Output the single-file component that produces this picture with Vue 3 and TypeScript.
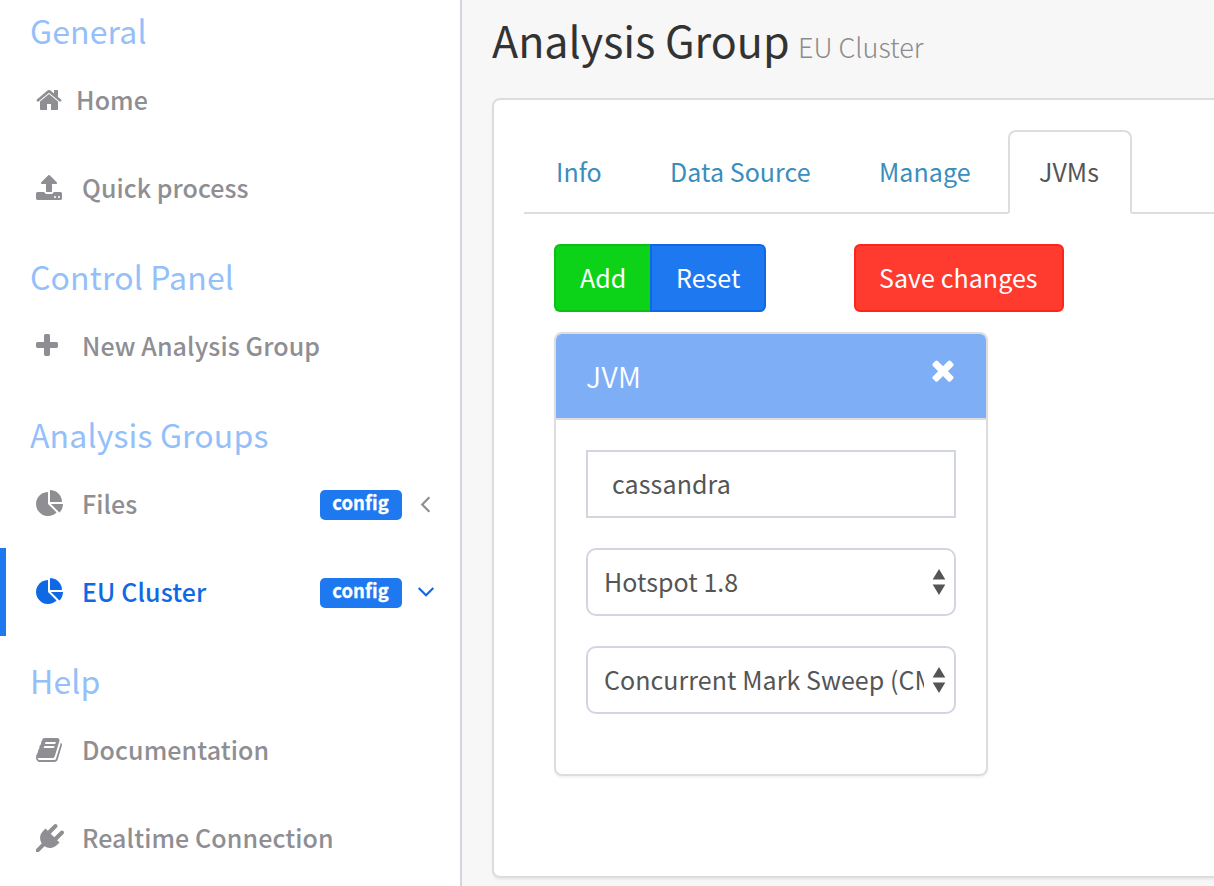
<script setup lang="ts">
import { ref } from 'vue'

interface MenuItem {
  label: string
  icon: string
  kind: string
  active?: boolean
  config?: boolean
}
interface MenuSection {
  title: string
  kind: string
  items: MenuItem[]
}

const icons: Record<string, string> = {
  home: 'M1472 992v480q0 26-19 45t-45 19h-384v-384h-256v384h-384q-26 0-45-19t-19-45v-480q0-1 .5-3t.5-3l575-474 575 474q1 2 1 6zm223-69l-62 74q-8 9-21 11h-3q-13 0-21-7l-692-577-692 577q-12 8-24 7-13-2-21-11l-62-74q-8-10-7-23.5t11-21.5l719-599q32-26 76-26t76 26l244 204v-195q0-14 9-23t23-9h192q14 0 23 9t9 23v408l219 182q10 8 11 21.5t-7 23.5z',
  upload: 'M1344 1472q0-26-19-45t-45-19-45 19-19 45 19 45 45 19 45-19 19-45zm256 0q0-26-19-45t-45-19-45 19-19 45 19 45 45 19 45-19 19-45zm128-224v320q0 40-28 68t-68 28h-1472q-40 0-68-28t-28-68v-320q0-40 28-68t68-28h427q21 56 70.5 92t110.5 36h256q61 0 110.5-36t70.5-92h427q40 0 68 28t28 68zm-325-648q-17 40-59 40h-256v448q0 26-19 45t-45 19h-256q-26 0-45-19t-19-45v-448h-256q-42 0-59-40-17-39 14-69l448-448q18-19 45-19t45 19l448 448q31 30 14 69z',
  plus: 'M1600 736v192q0 40-28 68t-68 28h-416v416q0 40-28 68t-68 28h-192q-40 0-68-28t-28-68v-416h-416q-40 0-68-28t-28-68v-192q0-40 28-68t68-28h416v-416q0-40 28-68t68-28h192q40 0 68 28t28 68v416h416q40 0 68 28t28 68z',
  pie: 'M768 890l546 546q-106 108-247.5 168t-298.5 60q-209 0-385.5-103t-279.5-279.5-103-385.5 103-385.5 279.5-279.5 385.5-103v762zm187 6h773q0 157-60 298.5t-168 247.5zm709-128h-768v-768q209 0 385.5 103t279.5 279.5 103 385.5z',
  book: 'M1703 478q40 57 18 129l-275 906q-19 64-76.5 107.5t-122.5 43.5h-923q-77 0-148.5-53.5t-99.5-131.5q-24-67-2-127 0-4 3-27t4-37q1-8-3-21.5t-3-19.5q2-11 8-21t16.5-23.5 16.5-23.5q23-38 45-91.5t30-91.5q3-10 .5-30t-.5-28q3-11 17-28t17-23q21-36 42-92t25-90q1-9-2.5-32t.5-28q4-13 22-30.5t22-22.5q19-26 42.5-84.5t27.5-96.5q1-8-3-25.5t-2-26.5q2-8 9-18t18-23 17-21q8-12 16.5-30.5t15-35 16-36 19.5-32 26.5-23.5 36-11.5 47.5 5.5l-1 3q38-9 51-9h761q74 0 114 56t18 130l-274 906q-36 119-71.5 153.5t-128.5 34.5h-869q-27 0-38 15-11 16-1 43 24 70 144 70h923q29 0 56-15.5t35-41.5l300-987q7-22 5-57 38 15 59 43zm-1064 2q-4 13 2 22.5t20 9.5h608q13 0 25.5-9.5t16.5-22.5l21-64q4-13-2-22.5t-20-9.5h-608q-13 0-25.5 9.5t-16.5 22.5zm-83 256q-4 13 2 22.5t20 9.5h608q13 0 25.5-9.5t16.5-22.5l21-64q4-13-2-22.5t-20-9.5h-608q-13 0-25.5 9.5t-16.5 22.5z',
  plug: 'M1755 453q37 38 37 90.5t-37 90.5l-401 400 150 150-160 160q-163 163-389.5 186.5t-411.5-100.5l-362 362h-181v-181l362-362q-124-185-100.5-411.5t186.5-389.5l160-160 150 150 400-401q38-37 91-37t90 37 37 90.5-37 90.5l-400 401 234 234 401-400q38-37 91-37t90 37z',
  times: 'M1490 1322q0 40-28 68l-136 136q-28 28-68 28t-68-28l-294-294-294 294q-28 28-68 28t-68-28l-136-136q-28-28-28-68t28-68l294-294-294-294q-28-28-28-68t28-68l136-136q28-28 68-28t68 28l294 294 294-294q28-28 68-28t68 28l136 136q28 28 28 68t-28 68l-294 294 294 294q28 28 28 68z',
}

const sections: MenuSection[] = [
  {
    title: 'General',
    kind: 's-general',
    items: [
      { label: 'Home', icon: 'home', kind: 'i-home' },
      { label: 'Quick process', icon: 'upload', kind: 'i-quick' },
    ],
  },
  {
    title: 'Control Panel',
    kind: 's-control',
    items: [{ label: 'New Analysis Group', icon: 'plus', kind: 'i-new' }],
  },
  {
    title: 'Analysis Groups',
    kind: 's-groups',
    items: [
      { label: 'Files', icon: 'pie', kind: 'i-files', config: true },
      { label: 'EU Cluster', icon: 'pie', kind: 'i-eu', config: true, active: true },
    ],
  },
  {
    title: 'Help',
    kind: 's-help',
    items: [
      { label: 'Documentation', icon: 'book', kind: 'i-doc' },
      { label: 'Realtime Connection', icon: 'plug', kind: 'i-real' },
    ],
  },
]

const tabs = [
  { label: 'Info', kind: 't-info' },
  { label: 'Data Source', kind: 't-data' },
  { label: 'Manage', kind: 't-manage' },
  { label: 'JVMs', kind: 't-jvms' },
]
const activeTab = ref('JVMs')
const jvmName = ref('cassandra')
const selects = ['Hotspot 1.8', 'Concurrent Mark Sweep (CMS)']
</script>

<template>
  <div class="page">
    <aside class="sidebar">
      <section v-for="s in sections" :key="s.title" :class="s.kind">
        <h2 class="section-title"><span>{{ s.title }}</span></h2>
        <a v-for="i in s.items" :key="i.label" class="item" :class="[i.kind, { active: i.active }]">
          <svg class="icon" viewBox="0 0 1792 1792"><path :d="icons[i.icon]" /></svg>
          <span class="label">{{ i.label }}</span>
          <template v-if="i.config">
            <span class="badge">config</span>
            <svg class="angle" viewBox="0 0 20 20">
              <path v-if="i.active" d="M2.7 6 10 13.2 17.3 6" />
              <path v-else d="M13.4 3.2 6.2 10.5 13.4 17.8" />
            </svg>
          </template>
        </a>
      </section>
    </aside>

    <main class="main">
      <h1 class="title">
        <span class="title-text">Analysis Group</span>
        <small>EU Cluster</small>
      </h1>
      <div class="card">
        <nav class="tabs">
          <a v-for="t in tabs" :key="t.label" class="tab" :class="[t.kind, { on: t.label === activeTab }]" @click="activeTab = t.label"><span>{{ t.label }}</span></a>
        </nav>
        <div class="body">
          <div class="buttons">
            <button class="btn add">Add</button>
            <button class="btn reset">Reset</button>
            <button class="btn save">Save changes</button>
          </div>
          <div class="panel">
            <header class="panel-head">
              <span class="panel-title">JVM</span>
              <svg class="close" viewBox="0 0 1792 1792"><path :d="icons.times" /></svg>
            </header>
            <div class="panel-body">
              <input v-model="jvmName" class="field" type="text" />
              <div v-for="s in selects" :key="s" class="select">
                <span class="value">{{ s }}</span>
                <svg class="arrows" viewBox="0 0 14 26"><path d="M7 0 13.3 10.6H.7zM7 26 13.3 15.4H.7z" /></svg>
              </div>
            </div>
          </div>
        </div>
      </div>
    </main>
  </div>
</template>

<style>
html,
body {
  margin: 0;
  overflow: hidden;
}
</style>

<style scoped>
* {
  box-sizing: border-box;
}
.page {
  display: flex;
  width: 1214px;
  height: 886px;
  overflow: hidden;
  background: #f7f7f7;
  font-family: 'Source Sans Pro', 'Noto Sans CJK SC', sans-serif;
  font-size: 25px;
  letter-spacing: 0.06px;
  color: #555;
  white-space: nowrap;
}
.sidebar {
  flex: none;
  width: 462px;
  height: 900px;
  margin-top: -14px;
  background: #fff;
  border-right: 2px solid #d2d6de;
}
.section-title {
  display: flex;
  height: 70px;
  margin: 0;
  padding: 16px 0 0 30px;
  font-size: 32px;
  letter-spacing: 0.14px;
  line-height: 56px;
  font-weight: 400;
  color: #94bff9;
}
.item {
  display: flex;
  align-items: center;
  height: 88px;
  padding-left: 30px;
  border-left: 6px solid transparent;
  color: #8e8e93;
  font-weight: 500;
}
.item.active {
  border-left-color: #1e78f0;
  color: #0f69e4;
}
.icon {
  flex: none;
  width: 28px;
  height: 28px;
  margin-right: 18px;
  fill: currentColor;
}
.i-home .icon {
  margin-left: -1.3px;
  margin-right: 13.3px;
}
.i-quick .icon,
.i-doc .icon {
  margin-left: -1px;
  margin-right: 19px;
}
.i-new .icon {
  margin-left: -3px;
  margin-right: 21px;
}
.label {
  width: 238px;
  line-height: 36px;
  padding-bottom: 3px;
  letter-spacing: 0.1px;
}
.i-quick .label {
  letter-spacing: 0.04px;
}
.badge {
  width: 82px;
  height: 30px;
  margin-top: 2px;
  padding-right: 1px;
  border-radius: 5px;
  background: #1e78f0;
  color: #fff;
  font-size: 18.5px;
  font-weight: 700;
  -webkit-text-stroke: 0.3px #fff;
  line-height: 25px;
  text-align: center;
}
.angle {
  width: 20px;
  height: 20px;
  margin-left: 14px;
  fill: none;
  stroke: currentColor;
  stroke-width: 2.2;
}
.main {
  flex: 1;
  min-width: 0;
  padding-left: 30px;
}
.title {
  display: flex;
  align-items: baseline;
  height: 98px;
  margin: 0;
  font-size: 43px;
  letter-spacing: 0;
  line-height: 78px;
  font-weight: 400;
  color: #333;
}
.title small {
  margin-left: 8.4px;
  font-size: 27px;
  font-weight: 300;
  color: #8c8c8c;
}
.card {
  width: 760px;
  height: 780px;
  padding: 30px;
  border: 2px solid #ddd;
  border-radius: 8px;
  background: #fff;
  box-shadow: 0 2px 2px rgba(0, 0, 0, 0.05);
}
.tabs {
  display: flex;
  gap: 4px;
  height: 84px;
  box-shadow: inset 0 -2px #ddd;
}
.tab {
  height: 84px;
  padding: 0 30px;
  border: 2px solid transparent;
  line-height: 78px;
  color: #3c8dbc;
}
.t-info {
  width: 110px;
}
.t-data {
  width: 206px;
}
.t-manage {
  width: 156px;
  padding-left: 29px;
}
.t-jvms {
  width: 124px;
  padding-left: 29px;
}
.tab.on {
  border-color: #ddd;
  border-bottom: 2px solid #fff;
  border-radius: 8px 8px 0 0;
  background: #fff;
  color: #555;
}
.body {
  padding: 30px;
}
.buttons {
  display: flex;
  height: 68px;
}
.btn {
  height: 68px;
  padding: 0 0 2px 24px;
  border: 2px solid;
  font: inherit;
  letter-spacing: inherit;
  line-height: 62px;
  text-align: left;
  color: #fff;
}
.add {
  width: 96px;
  border-color: #0cbe18;
  border-right: 0;
  border-radius: 6px 0 0 6px;
  background: #0cd318;
}
.reset {
  width: 116px;
  border-color: #0f69e4;
  border-radius: 0 6px 6px 0;
  background: #1e78f0;
}
.save {
  width: 210px;
  margin-left: 88px;
  padding-left: 23px;
  border-color: #ff2419;
  border-radius: 6px;
  background: #ff3b30;
}
.panel {
  width: 434px;
  height: 444px;
  margin-top: 20px;
  border: 2px solid #ddd;
  border-radius: 8px;
  background: #fff;
  box-shadow: 0 2px 2px rgba(0, 0, 0, 0.05);
}
.panel-head {
  display: flex;
  justify-content: space-between;
  height: 86px;
  padding: 0 27px 0 30px;
  border-bottom: 2px solid #ddd;
  border-radius: 6px 6px 0 0;
  background: #7daef6;
  color: #fff;
  font-size: 28.5px;
  letter-spacing: 0.3px;
  line-height: 84px;
  font-weight: 350;
}
.close {
  width: 32px;
  height: 32px;
  margin-top: 20px;
  fill: #fff;
}
.panel-body {
  display: flex;
  flex-direction: column;
  gap: 30px;
  padding: 30px;
}
.field,
.select {
  width: 370px;
  height: 68px;
  border: 2px solid #d2d6de;
  background: #fff;
}
.field {
  padding: 0 24px 2px;
  border-radius: 0;
  font: inherit;
  letter-spacing: 0.12px;
  color: #555;
  outline: none;
}
.select {
  display: flex;
  align-items: center;
  padding-left: 16px;
  border-color: #d2d6e2;
  border-radius: 10px;
}
.value {
  width: 320px;
  margin-right: 8.4px;
  overflow: hidden;
  padding-bottom: 2px;
  line-height: 62px;
}
.arrows {
  flex: none;
  width: 14px;
  height: 26px;
  fill: #555;
}
</style>
